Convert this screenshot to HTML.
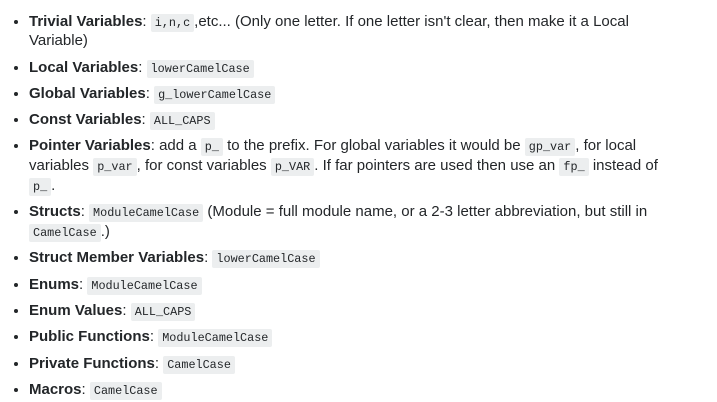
<!DOCTYPE html>
<html><head><style>
body{margin:0;background:#fff;width:717px;height:402px;overflow:hidden;font-family:"Liberation Sans",Arial,sans-serif;font-size:15px;color:#232629;}
ul{margin:0;padding:11.5px 0 0 29px;list-style:disc;}
li{line-height:19.8px;margin-bottom:6.5px;white-space:nowrap;}
b{font-weight:bold;}
code{font-family:"Liberation Mono",monospace;font-size:11.8px;line-height:1;background:#eceeef;padding:2px 4px;border-radius:2px;}
</style></head><body>
<ul>
<li><b>Trivial Variables</b>: <code>i,n,c</code>,etc... (Only one letter. If one letter isn't clear, then make it a Local<br>Variable)</li>
<li><b>Local Variables</b>: <code>lowerCamelCase</code></li>
<li><b>Global Variables</b>: <code>g_lowerCamelCase</code></li>
<li><b>Const Variables</b>: <code>ALL_CAPS</code></li>
<li><b>Pointer Variables</b>: add a <code>p_</code> to the prefix. For global variables it would be <code>gp_var</code>, for local<br>variables <code>p_var</code>, for const variables <code>p_VAR</code>. If far pointers are used then use an <code>fp_</code> instead of<br><code>p_</code>.</li>
<li><b>Structs</b>: <code>ModuleCamelCase</code> (Module = full module name, or a 2-3 letter abbreviation, but still in<br><code>CamelCase</code>.)</li>
<li><b>Struct Member Variables</b>: <code>lowerCamelCase</code></li>
<li><b>Enums</b>: <code>ModuleCamelCase</code></li>
<li><b>Enum Values</b>: <code>ALL_CAPS</code></li>
<li><b>Public Functions</b>: <code>ModuleCamelCase</code></li>
<li><b>Private Functions</b>: <code>CamelCase</code></li>
<li><b>Macros</b>: <code>CamelCase</code></li>
</ul>
</body></html>
